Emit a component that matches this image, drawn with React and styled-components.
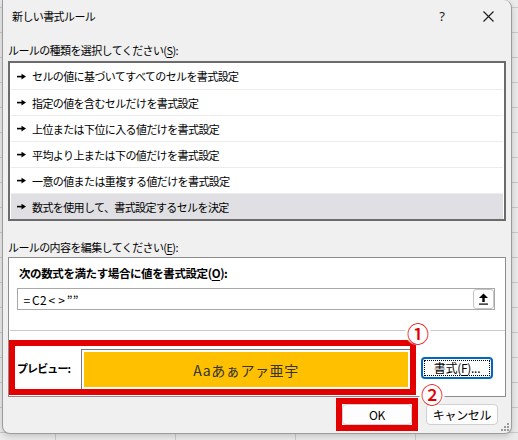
import React from "react";
import styled, { createGlobalStyle } from "styled-components";

const GlobalStyle = createGlobalStyle`
  html, body { margin: 0; padding: 0; }
  body {
    width: 518px;
    height: 440px;
    overflow: hidden;
    background-color: #ebebeb;
    background-image:
      repeating-linear-gradient(to bottom, transparent 0 7px, #cacaca 7px 8px, transparent 8px 25px),
      repeating-linear-gradient(to right, transparent 0 55px, #cacaca 55px 56px, transparent 56px 120px);
    font-family: "Noto Sans CJK JP", "Noto Sans", sans-serif;
    color: #000;
  }
`;

const Dialog = styled.div`
  position: relative;
  margin-left: 2px;
  width: 510px;
  height: 434px;
  box-sizing: border-box;
  background: #f0f0f0;
  border: 1px solid #9c9c9c;
  border-top: none;
  border-radius: 0 8px 7px 8px;
  box-shadow: 0 2px 6px rgba(0, 0, 0, 0.18);
  display: flex;
  flex-direction: column;
`;

const TitleBar = styled.div`
  height: 32px;
  display: flex;
  align-items: center;
  padding-left: 9px;
`;

const Title = styled.div`
  font-size: 11px;
  letter-spacing: -0.6px;
`;

const TitleButtons = styled.div`
  margin-left: auto;
  display: flex;
  height: 100%;
`;

const TitleButton = styled.div`
  width: 46px;
  height: 100%;
  display: flex;
  align-items: center;
  justify-content: center;
  font-family: "Noto Sans", sans-serif;
  font-size: 13px;
  color: #1a1a1a;
`;

const Body = styled.div`
  padding: 0 5px;
  display: flex;
  flex-direction: column;
`;

const SectionLabel = styled.div`
  height: 16px;
  line-height: 16px;
  font-size: 11px;
  letter-spacing: -0.6px;
  margin-top: ${(p) => p.$top}px;
`;

const Mn = styled.span`
  text-decoration: underline;
  text-underline-offset: 2px;
`;

const RuleList = styled.div`
  margin-top: 3px;
  border: 2px solid #6b6b6b;
  background: #fff;
  padding: 0 1px;
  display: flex;
  flex-direction: column;
`;

const RuleRow = styled.div`
  height: 26px;
  box-sizing: border-box;
  display: flex;
  align-items: center;
  gap: 6px;
  padding-left: 6px;
  font-size: 11px;
  letter-spacing: -0.6px;
  border-top: ${(p) => (p.$first ? "none" : "1px solid #ececec")};
  background: ${(p) => (p.$selected ? "#e0e0e4" : "#fff")};
`;

const Panel = styled.div`
  margin-top: 2px;
  height: 140px;
  box-sizing: border-box;
  border: 1px solid #8c8c8c;
  background: #fff;
  display: flex;
  flex-direction: column;
`;

const BoldLabel = styled.div`
  margin: 7px 0 0 10px;
  height: 16px;
  line-height: 16px;
  font-size: 11.5px;
  font-weight: 700;
  letter-spacing: -0.4px;
`;

const FormulaInput = styled.div`
  margin: 7px 10px 0 8px;
  height: 22px;
  box-sizing: border-box;
  border: 1px solid #a8a8a8;
  display: flex;
  align-items: center;
  padding-left: 4px;
`;

const FormulaText = styled.span`
  flex: 1;
  font-family: "Noto Sans CJK JP", sans-serif;
  font-size: 12px;
  letter-spacing: 0.3px;
`;

const Sym = styled.span`
  padding: 0 1.5px;
`;

const CollapseButton = styled.div`
  width: 21px;
  height: 20px;
  box-sizing: border-box;
  border: 1px solid #c6c6c6;
  border-radius: 3px;
  background: #fdfdfd;
  display: flex;
  align-items: center;
  justify-content: center;
`;

const Separator = styled.div`
  margin: 20px 0 0 1px;
  height: 1px;
  background: #c9c9c9;
`;

const PreviewRow = styled.div`
  margin-top: 9px;
  display: flex;
  align-items: center;
  gap: 5px;
`;

const RedFrame = styled.div`
  border: 6px solid #e30000;
  background: #fff;
  box-sizing: border-box;
  display: flex;
  align-items: center;
`;

const PreviewFrame = styled(RedFrame)`
  width: 407px;
  height: 55px;
  padding-left: 2px;
`;

const PreviewLabel = styled.div`
  width: 64px;
  align-self: center;
  font-size: 11px;
  font-weight: 700;
  letter-spacing: -0.9px;
`;

const PreviewBox = styled.div`
  width: 329px;
  height: 40px;
  align-self: flex-end;
  box-sizing: border-box;
  border-top: 1px solid #7a7a7a;
  border-left: 1px solid #7a7a7a;
  padding: 2px;
  background: #fff;
  display: flex;
`;

const PreviewFill = styled.div`
  flex: 1;
  background: #ffc000;
  display: flex;
  align-items: center;
  justify-content: center;
  font-size: 14px;
  letter-spacing: 0.6px;
  color: #333;
`;

const Button = styled.div`
  box-sizing: border-box;
  display: flex;
  align-items: center;
  justify-content: center;
  background: #fdfdfd;
  border: 1px solid #d0d0d0;
  border-radius: 4px;
  font-size: 12px;
  letter-spacing: -0.3px;
  width: ${(p) => p.$w}px;
  height: ${(p) => p.$h}px;
`;

const FocusButton = styled(Button)`
  border: 2px solid #0067c0;
  padding: 1px;
`;

const FocusInner = styled.div`
  width: 100%;
  height: 100%;
  box-sizing: border-box;
  border: 1px dotted #000;
  display: flex;
  align-items: center;
  justify-content: center;
`;

const ButtonRow = styled.div`
  margin-top: 1px;
  display: flex;
  justify-content: flex-end;
  align-items: center;
  gap: 8px;
  padding-right: 8px;
`;

const OkFrame = styled(RedFrame)`
  width: 82px;
  height: 33px;
`;

const Badge = styled.div`
  position: absolute;
  left: ${(p) => p.$x}px;
  top: ${(p) => p.$y}px;
  width: 24px;
  height: 24px;
  border-radius: 50%;
  background: #fff;
  color: #e30000;
  font-size: 22px;
  font-weight: 500;
  line-height: 24px;
  text-align: center;
  box-shadow: 0 0 1px 1px rgba(255, 255, 255, 0.9);
`;

const Grip = styled.svg`
  position: absolute;
  right: 2px;
  bottom: 2px;
`;

const Marker = () => (
  <svg width="9" height="7" viewBox="0 0 9 7">
    <rect x="0" y="2.8" width="5" height="1.6" fill="#000" />
    <polygon points="4.5,0.8 9,3.6 4.5,6.4" fill="#000" />
  </svg>
);

const rules = [
  "セルの値に基づいてすべてのセルを書式設定",
  "指定の値を含むセルだけを書式設定",
  "上位または下位に入る値だけを書式設定",
  "平均より上または下の値だけを書式設定",
  "一意の値または重複する値だけを書式設定",
  "数式を使用して、書式設定するセルを決定",
];

export default function App() {
  return (
    <>
      <GlobalStyle />
      <Dialog>
        <TitleBar>
          <Title>新しい書式ルール</Title>
          <TitleButtons>
            <TitleButton>?</TitleButton>
            <TitleButton>
              <svg width="11" height="11" viewBox="0 0 11 11">
                <path d="M0.5 0.5 L10.5 10.5 M10.5 0.5 L0.5 10.5" stroke="#1a1a1a" strokeWidth="1.1" />
              </svg>
            </TitleButton>
          </TitleButtons>
        </TitleBar>
        <Body>
          <SectionLabel $top={10}>
            ルールの種類を選択してください(<Mn>S</Mn>):
          </SectionLabel>
          <RuleList>
            {rules.map((r, i) => (
              <RuleRow key={r} $first={i === 0} $selected={i === rules.length - 1}>
                <Marker />
                <span>{r}</span>
              </RuleRow>
            ))}
          </RuleList>
          <SectionLabel $top={18}>
            ルールの内容を編集してください(<Mn>E</Mn>):
          </SectionLabel>
          <Panel>
            <BoldLabel>
              次の数式を満たす場合に値を書式設定(<Mn>O</Mn>):
            </BoldLabel>
            <FormulaInput>
              <FormulaText>
                <Sym>=</Sym>C2<Sym>&lt;</Sym><Sym>&gt;</Sym>””
              </FormulaText>
              <CollapseButton>
                <svg width="11" height="12" viewBox="0 0 11 12">
                  <polygon points="5.5,0.5 10,5 1,5" fill="#000" />
                  <rect x="4.3" y="4.5" width="2.4" height="4.5" fill="#000" />
                  <rect x="1" y="10.5" width="9" height="1.2" fill="#000" />
                </svg>
              </CollapseButton>
            </FormulaInput>
            <Separator />
            <PreviewRow>
              <PreviewFrame>
                <PreviewLabel>プレビュー:</PreviewLabel>
                <PreviewBox>
                  <PreviewFill>Aaあぁアァ亜宇</PreviewFill>
                </PreviewBox>
              </PreviewFrame>
              <FocusButton $w={72} $h={22}>
                <FocusInner>
                  書式(<Mn>F</Mn>)...
                </FocusInner>
              </FocusButton>
            </PreviewRow>
          </Panel>
          <ButtonRow>
            <OkFrame>
              <Button $w={70} $h={21}>OK</Button>
            </OkFrame>
            <Button $w={72} $h={21}>キャンセル</Button>
          </ButtonRow>
        </Body>
        <Badge $x={403} $y={320}>①</Badge>
        <Badge $x={417} $y={381}>②</Badge>
        <Grip width="8" height="8" viewBox="0 0 8 8">
          <rect x="6" y="0" width="2" height="2" fill="#9a9a9a" />
          <rect x="3" y="3" width="2" height="2" fill="#9a9a9a" />
          <rect x="6" y="3" width="2" height="2" fill="#9a9a9a" />
          <rect x="0" y="6" width="2" height="2" fill="#9a9a9a" />
          <rect x="3" y="6" width="2" height="2" fill="#9a9a9a" />
          <rect x="6" y="6" width="2" height="2" fill="#9a9a9a" />
        </Grip>
      </Dialog>
    </>
  );
}
